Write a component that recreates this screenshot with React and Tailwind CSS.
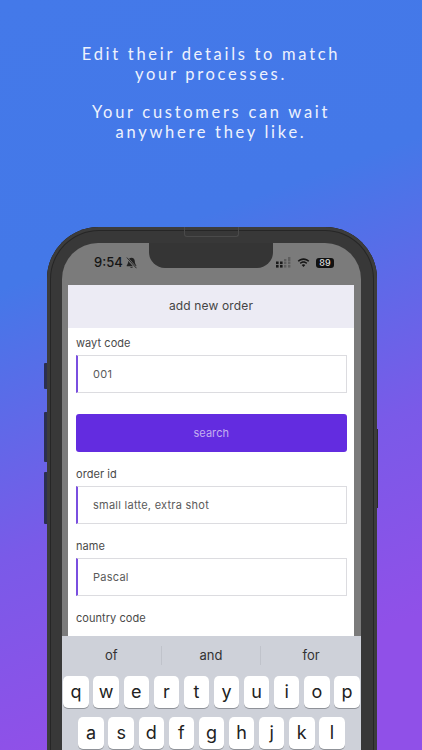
import React from "react";

const Field = ({ label, value, mt }) => (
  <div className={mt}>
    <div className="text-[11px] leading-[14px] tracking-[0.05px] text-[#4a4a4a]">{label}</div>
    <div className="mt-[5px] flex h-[38px] items-center border border-l-2 border-[#dcdce0] border-l-[#7a4fe0] bg-white pl-[15px] text-[11px] tracking-[0.25px] text-[#5a5a5a]">
      {value}
    </div>
  </div>
);

const Key = ({ k }) => (
  <div className="flex h-[32px] w-[25.5px] items-center justify-center rounded-[5px] bg-white pb-[1px] text-[18px] text-[#222] shadow-[0_1px_0_#8f9298]">
    {k}
  </div>
);

const Row = ({ keys, className }) => (
  <div className={`flex justify-center gap-[4.6px] ${className}`}>
    {keys.split("").map((k) => (
      <Key key={k} k={k} />
    ))}
  </div>
);

export default function App() {
  return (
    <div className="relative h-[750px] w-[422px] overflow-hidden bg-[linear-gradient(160deg,#4479e9_0%,#4478e8_32%,#7a5ae8_62%,#9050e8_85%)] [font-family:Inter,'Liberation_Sans',sans-serif]">
      <div className="pt-[44px] text-center text-[16.5px] leading-[20px] tracking-[2.7px] text-[#eef2fd] [font-family:Lato,sans-serif]">
        <p>Edit their details to match<br />your processes.</p>
        <p className="mt-[18px]">Your customers can wait<br />anywhere they like.</p>
      </div>

      <div className="relative ml-[47px] mt-[85px] h-[540px] w-[330px] rounded-t-[52px] bg-[#383838] pl-[15px] pr-[16px] pt-[16px] shadow-[inset_0_0_0_3px_#3c3c3c,inset_0_0_0_4px_#262626]">
        <div className="absolute left-[-3px] top-[136px] h-[26px] w-[3px] rounded-l-[1px] bg-[#2b2f4f]" />
        <div className="absolute left-[-3px] top-[185px] h-[50px] w-[3px] rounded-l-[1px] bg-[#2b2f4f]" />
        <div className="absolute left-[-3px] top-[245px] h-[52px] w-[3px] rounded-l-[1px] bg-[#2b2f4f]" />
        <div className="absolute right-[-1px] top-[202px] h-[79px] w-[1px] bg-[#2c2c2c]" />
        <div className="absolute left-[137px] top-0 h-[10px] w-[55px] rounded-b-[3px] border border-t-0 border-[#4a4a4a]" />

        <div className="relative h-full overflow-hidden rounded-t-[36px] bg-[#7b7b7b]">
          <div className="absolute left-[87px] top-0 h-[25px] w-[124px] rounded-b-[16px] bg-[#353535]" />

          <div className="flex h-[42px] items-center justify-between pb-[3px] pl-[32px] pr-[27px]">
            <div className="flex items-center gap-[3px] text-[13px] font-medium text-[#151515]">
              9:54
              <svg width="11" height="12" viewBox="0 0 12 13" fill="#222">
                <path d="M6 0.8c-2.2 0-3.6 1.7-3.6 3.8 0 2.5-1 3.6-1.6 4.4v1h10.400V9c-.6-.8-1.600-1.900-1.600-4.400C9.600 2.500 8.200.8 6 .8zM4.600 11a1.500 1.500 0 0 0 2.800 0z" />
                <path d="M1 1l10 11" stroke="#7b7b7b" strokeWidth="2.4" />
                <path d="M1 .6l10.400 11.600" stroke="#222" strokeWidth="1" />
              </svg>
            </div>
            <div className="flex items-center gap-[6px]">
              <svg width="15" height="11" viewBox="0 0 15 11" fill="#1a1a1a">
                <rect x="0" y="4.500" width="2.600" height="2.600" />
                <rect x="0" y="8" width="2.600" height="2.600" />
                <rect x="4" y="4.500" width="2.600" height="2.600" />
                <rect x="4" y="8" width="2.600" height="2.600" />
                <g opacity="0.3">
                  <rect x="8" y="2" width="2.400" height="2" />
                  <rect x="8" y="4.500" width="2.400" height="2.600" />
                  <rect x="8" y="8" width="2.400" height="2.600" />
                  <rect x="12" y="0" width="2.400" height="4" />
                  <rect x="12" y="4.500" width="2.400" height="2.600" />
                  <rect x="12" y="8" width="2.400" height="2.600" />
                </g>
              </svg>
              <svg width="13" height="10" viewBox="0 0 16 12" fill="#151515">
                <path d="M8 2.200c2.300 0 4.400.9 5.900 2.400l1.200-1.300C13.300 1.400 10.800.3 8 .3S2.700 1.400.9 3.300l1.200 1.300C3.600 3.100 5.700 2.200 8 2.200z" />
                <path d="M8 5.700c1.300 0 2.500.5 3.400 1.400l1.200-1.300C11.400 4.600 9.800 3.900 8 3.900s-3.400.7-4.600 1.900l1.200 1.300C5.500 6.200 6.700 5.700 8 5.700z" />
                <path d="M8 7.500c-.9 0-1.600.3-2.200.9L8 11l2.200-2.600c-.6-.6-1.300-.9-2.200-.9z" />
              </svg>
              <div className="flex h-[10px] w-[18px] items-center justify-center rounded-[3px] bg-[#111] text-[9px] font-medium leading-none text-[#ddd]">
                89
              </div>
            </div>
          </div>

          <div className="ml-[6px] mr-[7px] h-[360px] bg-white">
            <div className="flex h-[43px] items-center justify-center bg-[#ecebf4] pb-[1px] text-[12px] tracking-[0.15px] text-[#444]">
              add new order
            </div>
            <div className="pl-[8px] pr-[7.5px] pt-[8px]">
              <Field label="wayt code" value="001" />
              <button className="mt-[21px] flex h-[38px] w-full items-center justify-center rounded-[3px] bg-[#632ce0] text-[11px] tracking-[0.05px] text-[#c4aef0]">
                search
              </button>
              <Field label="order id" value="small latte, extra shot" mt="mt-[15px]" />
              <Field label="name" value="Pascal" mt="mt-[15px]" />
              <div className="mt-[15px] text-[11px] leading-[14px] tracking-[0.05px] text-[#4a4a4a]">country code</div>
            </div>
          </div>

          <div className="absolute inset-x-0 top-[392.500px] h-[130px] bg-[#ced1d9]">
            <div className="grid h-[40px] grid-cols-3 items-center text-center text-[13px] text-[#333]">
              <div className="border-r border-[#c0c3cb]">of</div>
              <div className="border-r border-[#c0c3cb]">and</div>
              <div>for</div>
            </div>
            <Row keys="qwertyuiop" className="mt-[0.5px]" />
            <Row keys="asdfghjkl" className="mt-[9px]" />
          </div>
        </div>
      </div>
    </div>
  );
}
